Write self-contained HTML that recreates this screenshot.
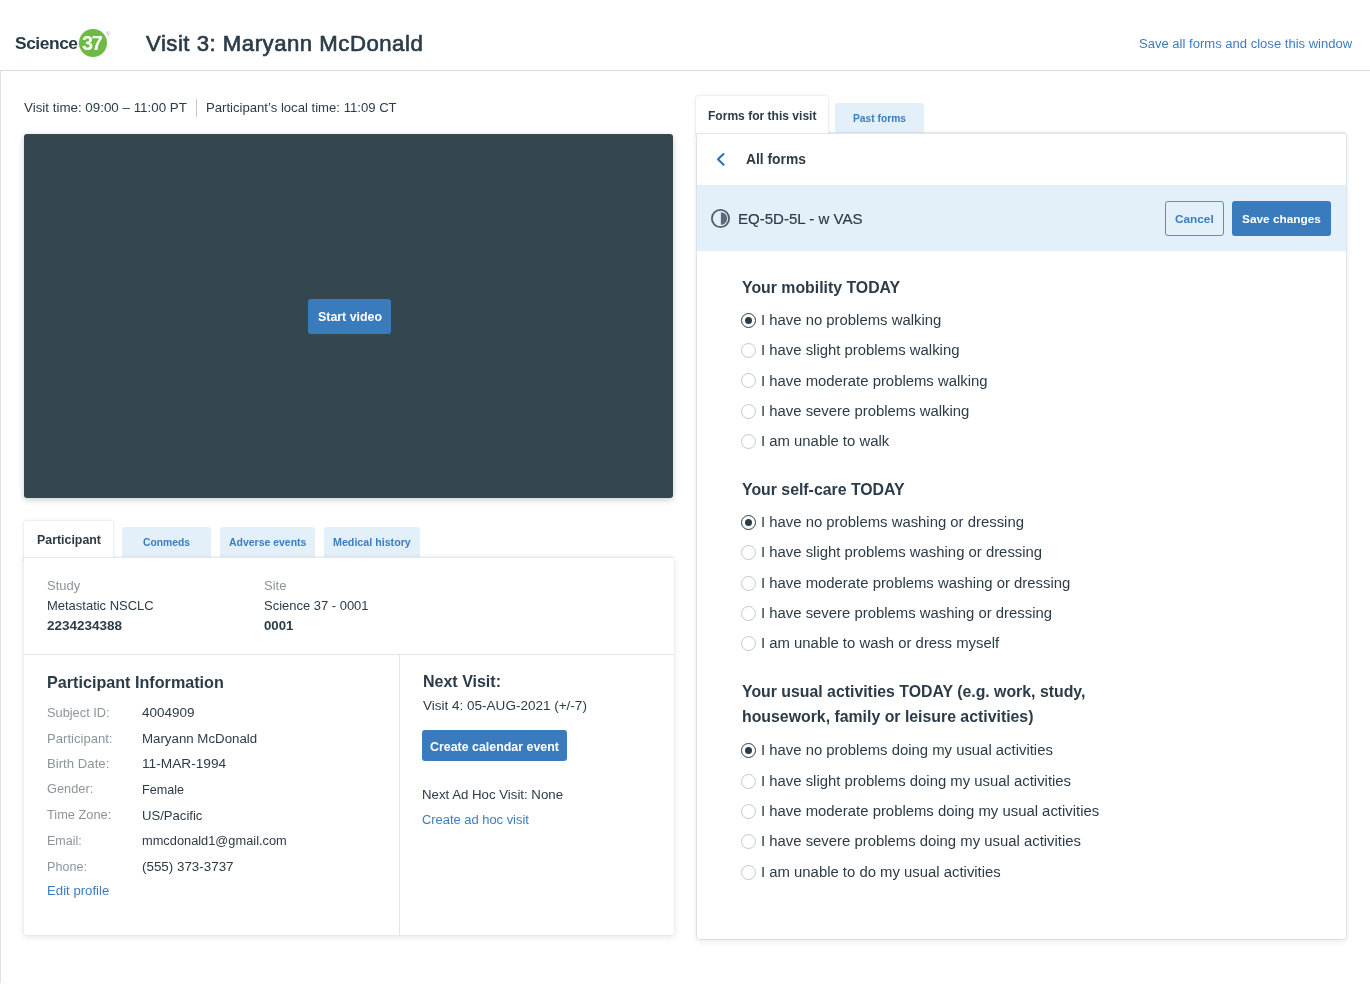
<!DOCTYPE html>
<html><head><meta charset="utf-8"><style>
html,body{margin:0;padding:0;}
body{width:1370px;height:1000px;position:relative;overflow:hidden;background:#fff;font-family:"Liberation Sans",sans-serif;}
.t{position:absolute;white-space:nowrap;line-height:1;will-change:transform;}
.b{position:absolute;}
</style></head><body>
<div class="t" style="left:15px;top:34.80px;font-size:17.4px;font-weight:700;color:#24394a;letter-spacing:-0.45px">Science</div>
<div class="b" style="left:79px;top:29px;width:28px;height:28px;border-radius:50%;background:#6dbb45"></div>
<div class="t" style="left:82.3px;top:33.30px;font-size:20px;font-weight:700;color:#ffffff;letter-spacing:-1.3px">37</div>
<div class="t" style="left:106px;top:32.00px;font-size:5px;font-weight:400;color:#9aa3a8;">®</div>
<div class="t" style="left:146px;top:33.10px;font-size:22.2px;font-weight:400;color:#2b3c48;letter-spacing:0.5px;-webkit-text-stroke:0.65px #2b3c48">Visit 3: Maryann McDonald</div>
<div class="t" style="left:1139px;top:36.58px;font-size:13.05px;font-weight:400;color:#3b7dbf;">Save all forms and close this window</div>
<div class="b" style="left:0px;top:69.5px;width:1370px;height:1.5px;background:#d4dadf"></div>
<div class="b" style="left:0px;top:71px;width:1px;height:912px;background:#dfe3e7"></div>
<div class="t" style="left:23.5px;top:101.02px;font-size:13.37px;font-weight:400;color:#2b3c48;">Visit time: 09:00 – 11:00 PT</div>
<div class="b" style="left:195.5px;top:98.5px;width:1.3px;height:18px;background:#c2c8cd"></div>
<div class="t" style="left:205.8px;top:101.14px;font-size:13.13px;font-weight:400;color:#2b3c48;">Participant’s local time: 11:09 CT</div>
<div class="b" style="left:24px;top:134px;width:649px;height:364px;background:#34464f;border-radius:3px;box-shadow:0 2px 6px rgba(0,0,0,0.2)"></div>
<div class="b" style="left:307.5px;top:299px;width:83.6px;height:34.5px;background:#3a7bbd;border-radius:3px"></div>
<div class="t" style="left:317.6px;top:311.21px;font-size:12.38px;font-weight:700;color:#ffffff;">Start video</div>
<div class="b" style="left:24px;top:520.5px;width:89px;height:40px;background:#fff;border-radius:3px 3px 0 0;box-shadow:0 0 0 1px rgba(30,50,70,0.04), 0 0 4px rgba(30,40,50,0.10)"></div>
<div class="b" style="left:122px;top:527px;width:89px;height:30px;background:#e4f0f9;border-radius:3px 3px 0 0"></div>
<div class="t" style="left:143px;top:538.14px;font-size:10.32px;font-weight:700;color:#3b7dbf;">Conmeds</div>
<div class="b" style="left:220px;top:527px;width:95px;height:30px;background:#e4f0f9;border-radius:3px 3px 0 0"></div>
<div class="t" style="left:229px;top:538.06px;font-size:10.47px;font-weight:700;color:#3b7dbf;">Adverse events</div>
<div class="b" style="left:324px;top:527px;width:96px;height:30px;background:#e4f0f9;border-radius:3px 3px 0 0"></div>
<div class="t" style="left:332.9px;top:537.45px;font-size:10.69px;font-weight:700;color:#3b7dbf;">Medical history</div>
<div class="b" style="left:24px;top:557px;width:650px;height:378px;background:#fff;border-radius:0 3px 3px 3px;box-shadow:0 0 0 1px rgba(30,50,70,0.02), 0 2px 6px rgba(30,40,50,0.13)"></div>
<div class="b" style="left:24px;top:520.5px;width:89px;height:36.5px;background:#fff;border-radius:3px 3px 0 0"></div>
<div class="b" style="left:24px;top:556.5px;width:650px;height:1px;background:#e6e9ec"></div>
<div class="t" style="left:36.8px;top:533.81px;font-size:12.38px;font-weight:700;color:#2b3c48;">Participant</div>
<div class="b" style="left:24px;top:654px;width:650px;height:1px;background:#e3e6e9"></div>
<div class="b" style="left:399px;top:655px;width:1px;height:280px;background:#e3e6e9"></div>
<div class="t" style="left:47.1px;top:579.31px;font-size:12.98px;font-weight:400;color:#8c959b;">Study</div>
<div class="t" style="left:47.1px;top:598.71px;font-size:12.98px;font-weight:400;color:#2b3c48;">Metastatic NSCLC</div>
<div class="t" style="left:47.1px;top:618.55px;font-size:13.5px;font-weight:700;color:#2b3c48;">2234234388</div>
<div class="t" style="left:264.3px;top:579.31px;font-size:12.98px;font-weight:400;color:#8c959b;">Site</div>
<div class="t" style="left:264.3px;top:598.71px;font-size:12.98px;font-weight:400;color:#2b3c48;">Science 37 - 0001</div>
<div class="t" style="left:264.3px;top:618.70px;font-size:13.2px;font-weight:700;color:#2b3c48;">0001</div>
<div class="t" style="left:47.3px;top:674.12px;font-size:16.17px;font-weight:700;color:#2b3c48;">Participant Information</div>
<div class="t" style="left:47.2px;top:706.60px;font-size:12.8px;font-weight:400;color:#8c959b;">Subject ID:</div>
<div class="t" style="left:142.2px;top:706.25px;font-size:13.5px;font-weight:400;color:#2b3c48;">4004909</div>
<div class="t" style="left:47.2px;top:731.95px;font-size:13.1px;font-weight:400;color:#8c959b;">Participant:</div>
<div class="t" style="left:142.2px;top:731.86px;font-size:13.29px;font-weight:400;color:#2b3c48;">Maryann McDonald</div>
<div class="t" style="left:47.2px;top:757.20px;font-size:13.2px;font-weight:400;color:#8c959b;">Birth Date:</div>
<div class="t" style="left:142.2px;top:756.95px;font-size:13.7px;font-weight:400;color:#2b3c48;">11-MAR-1994</div>
<div class="t" style="left:47.2px;top:783.10px;font-size:12.8px;font-weight:400;color:#8c959b;">Gender:</div>
<div class="t" style="left:142.2px;top:783.70px;font-size:12.6px;font-weight:400;color:#2b3c48;">Female</div>
<div class="t" style="left:47.2px;top:809.20px;font-size:12.8px;font-weight:400;color:#8c959b;">Time Zone:</div>
<div class="t" style="left:142.2px;top:809.05px;font-size:13.1px;font-weight:400;color:#2b3c48;">US/Pacific</div>
<div class="t" style="left:47.2px;top:835.35px;font-size:12.5px;font-weight:400;color:#8c959b;">Email:</div>
<div class="t" style="left:142.2px;top:834.69px;font-size:12.82px;font-weight:400;color:#2b3c48;">mmcdonald1@gmail.com</div>
<div class="t" style="left:47.2px;top:861.20px;font-size:12.6px;font-weight:400;color:#8c959b;">Phone:</div>
<div class="t" style="left:142.2px;top:860.30px;font-size:13.4px;font-weight:400;color:#2b3c48;">(555) 373-3737</div>
<div class="t" style="left:47.2px;top:884.10px;font-size:13.2px;font-weight:400;color:#3b7dbf;">Edit profile</div>
<div class="t" style="left:422.6px;top:674.40px;font-size:16.0px;font-weight:700;color:#2b3c48;">Next Visit:</div>
<div class="t" style="left:422.6px;top:698.53px;font-size:13.53px;font-weight:400;color:#2b3c48;">Visit 4: 05-AUG-2021 (+/-7)</div>
<div class="b" style="left:422px;top:730px;width:144.5px;height:31.2px;background:#3a7bbd;border-radius:3px"></div>
<div class="t" style="left:429.5px;top:741.00px;font-size:12.41px;font-weight:700;color:#ffffff;">Create calendar event</div>
<div class="t" style="left:422.4px;top:788.08px;font-size:13.24px;font-weight:400;color:#2b3c48;">Next Ad Hoc Visit: None</div>
<div class="t" style="left:422.4px;top:813.64px;font-size:12.92px;font-weight:400;color:#3b7dbf;">Create ad hoc visit</div>
<div class="b" style="left:835px;top:103px;width:89px;height:32px;background:#e4f0f9;border-radius:3px 3px 0 0"></div>
<div class="t" style="left:853.3px;top:114.28px;font-size:10.25px;font-weight:700;color:#3b7dbf;">Past forms</div>
<div class="b" style="left:696px;top:96px;width:131.5px;height:40px;background:#fff;border-radius:3px 3px 0 0;box-shadow:0 0 0 1px rgba(30,50,70,0.04), 0 0 4px rgba(30,40,50,0.10)"></div>
<div class="b" style="left:697px;top:133px;width:648.5px;height:806px;background:#fff;border-radius:0 3px 3px 3px;box-shadow:0 0 0 1px rgba(195,207,220,0.45), 0 2px 6px rgba(30,40,50,0.11)"></div>
<div class="b" style="left:696px;top:96px;width:131.5px;height:37px;background:#fff;border-radius:3px 3px 0 0"></div>
<div class="b" style="left:696px;top:132.5px;width:649.5px;height:1px;background:#e3e7ea"></div>
<div class="t" style="left:708px;top:109.77px;font-size:12.05px;font-weight:700;color:#2b3c48;">Forms for this visit</div>
<svg class="b" style="left:714px;top:151px" width="14" height="16" viewBox="0 0 14 16"><path d="M9.5 3 L4 8.3 L9.5 13.8" fill="none" stroke="#2d70be" stroke-width="2.1" stroke-linecap="round" stroke-linejoin="round"/></svg>
<div class="t" style="left:746px;top:152.68px;font-size:13.84px;font-weight:700;color:#2b3c48;">All forms</div>
<div class="b" style="left:697px;top:185px;width:648.5px;height:66px;background:#e4f0f9"></div>
<svg class="b" style="left:710px;top:208px" width="21" height="21" viewBox="0 0 21 21"><circle cx="10.5" cy="10.5" r="8.6" fill="none" stroke="#4f5e6a" stroke-width="1.8"/><path d="M10.9 4.2 A6.3 6.3 0 0 1 10.9 16.8 Z" fill="#5b6a78"/></svg>
<div class="t" style="left:738.4px;top:210.58px;font-size:15.04px;font-weight:400;color:#2b3c48;-webkit-text-stroke:0.2px #2b3c48">EQ-5D-5L - w VAS</div>
<div class="b" style="left:1165px;top:201px;width:59px;height:34.5px;border:1px solid #5a90c8;border-radius:3px;box-sizing:border-box"></div>
<div class="t" style="left:1175.4px;top:214.00px;font-size:11.8px;font-weight:700;color:#3b7dbf;">Cancel</div>
<div class="b" style="left:1232px;top:201px;width:99px;height:34.5px;background:#3a7bbd;border-radius:3px"></div>
<div class="t" style="left:1241.9px;top:213.98px;font-size:11.84px;font-weight:700;color:#ffffff;">Save changes</div>
<div class="t" style="left:742.4px;top:279.88px;font-size:15.85px;font-weight:700;color:#2b3c48;">Your mobility TODAY</div>
<div class="b" style="left:741.4px;top:312.59999999999997px;width:15px;height:15px;border-radius:50%;box-sizing:border-box;border:1.6px solid #2b3c48"></div><div class="b" style="left:745.4px;top:316.59999999999997px;width:7px;height:7px;border-radius:50%;background:#2b3c48"></div>
<div class="t" style="left:761.4px;top:312.76px;font-size:14.88px;font-weight:400;color:#2b3c48;">I have no problems walking</div>
<div class="b" style="left:741.4px;top:342.99999999999994px;width:15px;height:15px;border-radius:50%;box-sizing:border-box;border:1.2px solid #c3c8cc"></div>
<div class="t" style="left:761.4px;top:343.16px;font-size:14.88px;font-weight:400;color:#2b3c48;">I have slight problems walking</div>
<div class="b" style="left:741.4px;top:373.4px;width:15px;height:15px;border-radius:50%;box-sizing:border-box;border:1.2px solid #c3c8cc"></div>
<div class="t" style="left:761.4px;top:373.56px;font-size:14.88px;font-weight:400;color:#2b3c48;">I have moderate problems walking</div>
<div class="b" style="left:741.4px;top:403.79999999999995px;width:15px;height:15px;border-radius:50%;box-sizing:border-box;border:1.2px solid #c3c8cc"></div>
<div class="t" style="left:761.4px;top:403.96px;font-size:14.88px;font-weight:400;color:#2b3c48;">I have severe problems walking</div>
<div class="b" style="left:741.4px;top:434.19999999999993px;width:15px;height:15px;border-radius:50%;box-sizing:border-box;border:1.2px solid #c3c8cc"></div>
<div class="t" style="left:761.4px;top:434.36px;font-size:14.88px;font-weight:400;color:#2b3c48;">I am unable to walk</div>
<div class="t" style="left:742.4px;top:481.57px;font-size:15.85px;font-weight:700;color:#2b3c48;">Your self-care TODAY</div>
<div class="b" style="left:741.4px;top:514.6999999999999px;width:15px;height:15px;border-radius:50%;box-sizing:border-box;border:1.6px solid #2b3c48"></div><div class="b" style="left:745.4px;top:518.6999999999999px;width:7px;height:7px;border-radius:50%;background:#2b3c48"></div>
<div class="t" style="left:761.4px;top:514.86px;font-size:14.88px;font-weight:400;color:#2b3c48;">I have no problems washing or dressing</div>
<div class="b" style="left:741.4px;top:545.0999999999999px;width:15px;height:15px;border-radius:50%;box-sizing:border-box;border:1.2px solid #c3c8cc"></div>
<div class="t" style="left:761.4px;top:545.26px;font-size:14.88px;font-weight:400;color:#2b3c48;">I have slight problems washing or dressing</div>
<div class="b" style="left:741.4px;top:575.4999999999999px;width:15px;height:15px;border-radius:50%;box-sizing:border-box;border:1.2px solid #c3c8cc"></div>
<div class="t" style="left:761.4px;top:575.66px;font-size:14.88px;font-weight:400;color:#2b3c48;">I have moderate problems washing or dressing</div>
<div class="b" style="left:741.4px;top:605.9px;width:15px;height:15px;border-radius:50%;box-sizing:border-box;border:1.2px solid #c3c8cc"></div>
<div class="t" style="left:761.4px;top:606.06px;font-size:14.88px;font-weight:400;color:#2b3c48;">I have severe problems washing or dressing</div>
<div class="b" style="left:741.4px;top:636.3px;width:15px;height:15px;border-radius:50%;box-sizing:border-box;border:1.2px solid #c3c8cc"></div>
<div class="t" style="left:761.4px;top:636.46px;font-size:14.88px;font-weight:400;color:#2b3c48;">I am unable to wash or dress myself</div>
<div class="t" style="left:742.4px;top:683.58px;font-size:15.85px;font-weight:700;color:#2b3c48;">Your usual activities TODAY (e.g. work, study,</div>
<div class="t" style="left:742.4px;top:708.58px;font-size:15.85px;font-weight:700;color:#2b3c48;">housework, family or leisure activities)</div>
<div class="b" style="left:741.4px;top:743.1px;width:15px;height:15px;border-radius:50%;box-sizing:border-box;border:1.6px solid #2b3c48"></div><div class="b" style="left:745.4px;top:747.1px;width:7px;height:7px;border-radius:50%;background:#2b3c48"></div>
<div class="t" style="left:761.4px;top:743.26px;font-size:14.88px;font-weight:400;color:#2b3c48;">I have no problems doing my usual activities</div>
<div class="b" style="left:741.4px;top:773.5px;width:15px;height:15px;border-radius:50%;box-sizing:border-box;border:1.2px solid #c3c8cc"></div>
<div class="t" style="left:761.4px;top:773.66px;font-size:14.88px;font-weight:400;color:#2b3c48;">I have slight problems doing my usual activities</div>
<div class="b" style="left:741.4px;top:803.9px;width:15px;height:15px;border-radius:50%;box-sizing:border-box;border:1.2px solid #c3c8cc"></div>
<div class="t" style="left:761.4px;top:804.06px;font-size:14.88px;font-weight:400;color:#2b3c48;">I have moderate problems doing my usual activities</div>
<div class="b" style="left:741.4px;top:834.3000000000001px;width:15px;height:15px;border-radius:50%;box-sizing:border-box;border:1.2px solid #c3c8cc"></div>
<div class="t" style="left:761.4px;top:834.46px;font-size:14.88px;font-weight:400;color:#2b3c48;">I have severe problems doing my usual activities</div>
<div class="b" style="left:741.4px;top:864.7px;width:15px;height:15px;border-radius:50%;box-sizing:border-box;border:1.2px solid #c3c8cc"></div>
<div class="t" style="left:761.4px;top:864.86px;font-size:14.88px;font-weight:400;color:#2b3c48;">I am unable to do my usual activities</div>
</body></html>
